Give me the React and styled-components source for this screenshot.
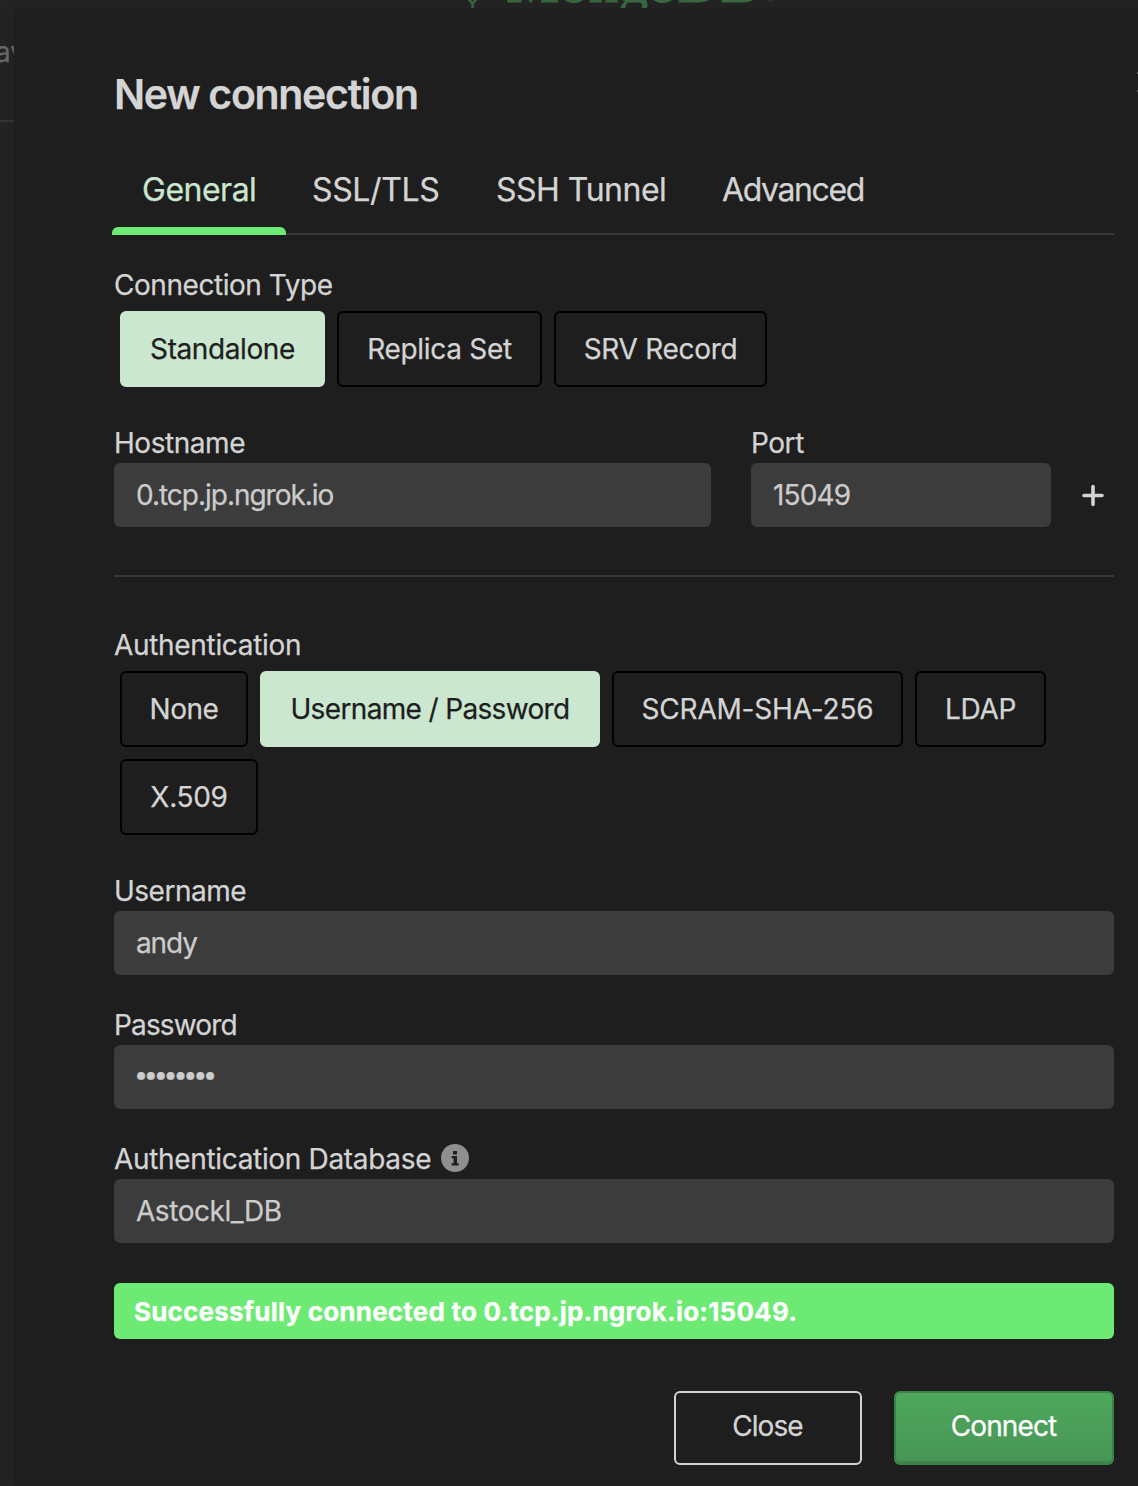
import React from 'react';
import styled, { createGlobalStyle } from 'styled-components';

const Global = createGlobalStyle`
  * { box-sizing: border-box; }
  body { margin: 0; background: #242424; overflow: hidden; }
`;
const sans = `Inter, "Liberation Sans", sans-serif`;

const Page = styled.div`
  position: relative;
  height: 1486px;
  overflow: hidden;
  background: #242424;
  color: #d4d4d4;
  font-family: ${sans};
  font-size: 28px;
  font-weight: 440;
  -webkit-text-stroke: 0.25px currentColor;
`;
const Backdrop = styled.div`
  position: absolute;
  inset: 0;
`;
const Brand = styled.div`
  position: absolute;
  left: 506px;
  top: -50px;
  display: flex;
  color: #3b6a42;
  font: 60px/64px "Liberation Serif", serif;
  letter-spacing: -0.4px;
  -webkit-text-stroke: 0.8px #3b6a42;
`;
const Registered = styled.span`
  margin-left: 6px;
  font-size: 11px;
  line-height: 97px;
  -webkit-text-stroke: 0;
`;
const Leaf = styled.svg`
  position: absolute;
  left: 464px;
  top: 0;
`;
const Crumb = styled.div`
  position: absolute;
  right: 1112px;
  top: 36px;
  font-size: 28px;
  line-height: 32px;
  color: #696969;
`;
const HeaderRule = styled.div`
  position: absolute;
  top: 120px;
  width: 100%;
  height: 2px;
  background: #30363a;
`;
const Modal = styled.main`
  position: relative;
  margin: 8px 0 0 14px;
  height: 1478px;
  padding: 60px 24px 0 100px;
  background: #1e1e1e;
  box-shadow: 0 0 16px rgba(0, 0, 0, 0.12);
`;
const CloseIcon = styled.svg`
  position: absolute;
  left: 1120px;
  top: 62px;
`;
const Title = styled.h1`
  margin: 0;
  font-size: 41px;
  font-weight: 600;
  line-height: 53px;
  letter-spacing: -1.3px;
`;
const Tabs = styled.nav`
  display: flex;
  height: 73px;
  margin-top: 41px;
  border-bottom: 2px solid #383838;
`;
const Tab = styled.a`
  position: relative;
  width: ${(p) => p.$width}px;
  padding-left: 28px;
  font-size: 32px;
  line-height: 56px;
  letter-spacing: ${(p) => p.$track}px;
  white-space: nowrap;
  color: ${(p) => (p.$active ? '#cbe7cf' : '#d4d4d4')};
  &::after {
    content: '';
    display: ${(p) => (p.$active ? 'block' : 'none')};
    position: absolute;
    left: -2px;
    right: -2px;
    bottom: -2px;
    height: 8px;
    border-radius: 6px 6px 0 0;
    background: #6cea74;
  }
`;
const Field = styled.div`
  margin-top: ${(p) => p.$gap}px;
  width: ${(p) => (p.$width ? p.$width + 'px' : 'auto')};
`;
const Label = styled.label`
  display: flex;
  align-items: center;
  gap: 10px;
  height: 36px;
  padding-bottom: ${(p) => (p.$group ? 0 : 3)}px;
  line-height: 33px;
  letter-spacing: ${(p) => p.$track ?? -0.45}px;
  svg {
    margin-bottom: 3px;
  }
`;
const Options = styled.div`
  display: flex;
  flex-wrap: wrap;
  gap: 12px;
  padding: 8px 6px 0;
`;
const Option = styled.button`
  width: ${(p) => p.$width}px;
  height: 76px;
  padding: 0;
  border: 2px solid ${(p) => (p.$active ? '#cbe7cf' : '#000')};
  border-radius: 6px;
  background: ${(p) => (p.$active ? '#cbe7cf' : 'transparent')};
  color: ${(p) => (p.$active ? '#1e1e1e' : '#d4d4d4')};
  font: 440 28px/36px ${sans};
  letter-spacing: ${(p) => p.$track}px;
`;
const Input = styled.input`
  display: block;
  width: 100%;
  height: 64px;
  padding: 0 22px 1px;
  border: 0;
  border-radius: 6px;
  background: #3c3c3c;
  color: #cccccc;
  font: 440 28px ${sans};
  letter-spacing: ${(p) => p.$track}px;
  &[type='password'] {
    padding: 0 20px 6px;
    font-size: 25px;
  }
`;
const HostRow = styled.div`
  display: flex;
  align-items: flex-end;
  gap: 40px;
`;
const AddButton = styled.button`
  display: flex;
  align-items: center;
  width: 24px;
  height: 64px;
  margin-left: -10px;
  padding: 0;
  border: 0;
  background: none;
`;
const Divider = styled.hr`
  height: 2px;
  margin: 48px 0 0;
  border: 0;
  background: #383838;
`;
const Alert = styled.div`
  height: 56px;
  margin-top: 40px;
  padding: 0 20px;
  border-radius: 6px;
  background: #6cea74;
  color: #fff;
  font-size: 26px;
  font-weight: 700;
  line-height: 57px;
  letter-spacing: 0.2px;
`;
const Actions = styled.footer`
  display: flex;
  justify-content: flex-end;
  gap: 32px;
  margin-top: 52px;
`;
const Action = styled.button`
  width: ${(p) => (p.$primary ? 220 : 188)}px;
  height: 74px;
  padding: 0 1px 4px 0;
  border: 2px solid ${(p) => (p.$primary ? '#3a8247' : '#d4d4d4')};
  border-radius: 6px;
  background: ${(p) => (p.$primary ? 'linear-gradient(#4fa85c, #479555)' : 'transparent')};
  box-shadow: ${(p) => (p.$primary ? 'inset 0 -2px 0 #3d8549' : 'none')};
  color: ${(p) => (p.$primary ? '#fff' : '#d4d4d4')};
  font: 440 28px ${sans};
  letter-spacing: -0.9px;
`;

const tabs = [['General', 170, -0.5], ['SSL/TLS', 184, -0.35], ['SSH Tunnel', 226, -0.5], ['Advanced', 200, -1.4]];
const types = [['Standalone', 205, -0.4], ['Replica Set', 205, -0.3], ['SRV Record', 213, -0.3]];
const auths = [
  ['None', 128, -0.5],
  ['Username / Password', 340, -0.65],
  ['SCRAM-SHA-256', 291, -0.2],
  ['LDAP', 131, -0.3],
  ['X.509', 138, -0.3],
];

const InfoIcon = () => (
  <svg width="28" height="28" viewBox="0 0 28 28">
    <circle cx="14" cy="14" r="14" fill="#8f8f8f" />
    <path d="M12 7h4v3.4h-4zM10.7 12h5.3v7.2h1.6v2.2h-7v-2.2h1.9v-5h-1.8z" fill="#1e1e1e" />
  </svg>
);

export default function App() {
  return (
    <Page>
      <Global />
      <Backdrop>
        <Leaf width="18" height="8" viewBox="0 0 18 8" fill="none" stroke="#3b6a42" strokeWidth="2.5">
          <path d="M3.5 -2L8.5 3.5V8M13.5 -2L8.5 3.5" />
        </Leaf>
        <Brand>MongoDB<Registered>®</Registered></Brand>
        <Crumb>Fav</Crumb>
        <HeaderRule />
      </Backdrop>
      <Modal>
        <CloseIcon width="24" height="24" viewBox="0 0 24 24" stroke="#d4d4d4" strokeWidth="3" strokeLinecap="round">
          <path d="M5 3L22 21M22 3L5 21" />
        </CloseIcon>
        <Title>New connection</Title>
        <Tabs>
          {tabs.map(([t, w, k], i) => <Tab key={t} $width={w} $track={k} $active={i === 0}>{t}</Tab>)}
        </Tabs>
        <Field $gap={32}>
          <Label $group>Connection Type</Label>
          <Options>
            {types.map(([t, w, k], i) => <Option key={t} $width={w} $track={k} $active={i === 0}>{t}</Option>)}
          </Options>
        </Field>
        <HostRow>
          <Field $gap={40} $width={597}>
            <Label>Hostname</Label>
            <Input $track={-1.02} defaultValue="0.tcp.jp.ngrok.io" />
          </Field>
          <Field $gap={40} $width={300}>
            <Label>Port</Label>
            <Input $track={-0.85} defaultValue="15049" />
          </Field>
          <AddButton aria-label="Add host">
            <svg width="24" height="24" viewBox="0 0 24 24" stroke="#d4d4d4" strokeWidth="3.6" strokeLinecap="round">
              <path d="M12 3.5v18M3 12.5h18" />
            </svg>
          </AddButton>
        </HostRow>
        <Divider />
        <Field $gap={50}>
          <Label $group $track={-0.32}>Authentication</Label>
          <Options>
            {auths.map(([t, w, k], i) => <Option key={t} $width={w} $track={k} $active={i === 1}>{t}</Option>)}
          </Options>
        </Field>
        <Field $gap={40}>
          <Label $track={-0.5}>Username</Label>
          <Input $track={-1.1} defaultValue="andy" />
        </Field>
        <Field $gap={34}>
          <Label $track={-0.85}>Password</Label>
          <Input type="password" $track={-4.2} defaultValue="password" />
        </Field>
        <Field $gap={34}>
          <Label $track={-0.33}>Authentication Database<InfoIcon /></Label>
          <Input $track={-0.45} defaultValue="Astockl_DB" />
        </Field>
        <Alert>Successfully connected to 0.tcp.jp.ngrok.io:15049.</Alert>
        <Actions>
          <Action>Close</Action>
          <Action $primary>Connect</Action>
        </Actions>
      </Modal>
    </Page>
  );
}
